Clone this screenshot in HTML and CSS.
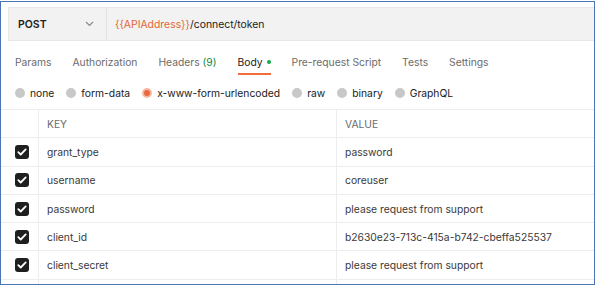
FILE: index.html
```html
<!DOCTYPE html>
<html lang="en">
<head>
    <meta charset="UTF-8">
    <title>POST token request</title>
    <link rel="stylesheet" href="styles.css">
</head>
<body>
    <div class="frame">

        <!-- request line -->
        <div class="request-bar">
            <div class="method">
                <span>POST</span>
                <svg class="chevron" width="9" height="6" viewBox="0 0 9 6"><path d="M1 1l3.5 3.5L8 1" fill="none" stroke="#8a8a8a" stroke-width="1.2"/></svg>
            </div>
            <div class="url"><span class="var">{{APIAddress}}</span>/connect/token</div>
        </div>

        <!-- tabs -->
        <div class="tabs">
            <div class="tab">Params</div>
            <div class="tab">Authorization</div>
            <div class="tab">Headers <span class="count">(9)</span></div>
            <div class="tab active">Body <span class="dot"></span></div>
            <div class="tab">Pre-request Script</div>
            <div class="tab">Tests</div>
            <div class="tab">Settings</div>
        </div>

        <!-- body types -->
        <div class="body-types">
            <div class="radio"><span class="circle"></span>none</div>
            <div class="radio"><span class="circle"></span>form-data</div>
            <div class="radio"><span class="circle checked"></span>x-www-form-urlencoded</div>
            <div class="radio"><span class="circle"></span>raw</div>
            <div class="radio"><span class="circle"></span>binary</div>
            <div class="radio"><span class="circle"></span>GraphQL</div>
        </div>

        <!-- key / value table -->
        <div class="kv-table">
            <div class="row head">
                <div class="cell check"></div>
                <div class="cell key">KEY</div>
                <div class="cell value">VALUE</div>
            </div>
            <div class="row">
                <div class="cell check"><span class="box"><svg width="10" height="8" viewBox="0 0 10 8"><path d="M1.3 4.2l2.4 2.3L8.7 1.4" fill="none" stroke="#fff" stroke-width="1.8" stroke-linecap="round" stroke-linejoin="round"/></svg></span></div>
                <div class="cell key">grant_type</div>
                <div class="cell value">password</div>
            </div>
            <div class="row">
                <div class="cell check"><span class="box"><svg width="10" height="8" viewBox="0 0 10 8"><path d="M1.3 4.2l2.4 2.3L8.7 1.4" fill="none" stroke="#fff" stroke-width="1.8" stroke-linecap="round" stroke-linejoin="round"/></svg></span></div>
                <div class="cell key">username</div>
                <div class="cell value">coreuser</div>
            </div>
            <div class="row">
                <div class="cell check"><span class="box"><svg width="10" height="8" viewBox="0 0 10 8"><path d="M1.3 4.2l2.4 2.3L8.7 1.4" fill="none" stroke="#fff" stroke-width="1.8" stroke-linecap="round" stroke-linejoin="round"/></svg></span></div>
                <div class="cell key">password</div>
                <div class="cell value">please request from support</div>
            </div>
            <div class="row">
                <div class="cell check"><span class="box"><svg width="10" height="8" viewBox="0 0 10 8"><path d="M1.3 4.2l2.4 2.3L8.7 1.4" fill="none" stroke="#fff" stroke-width="1.8" stroke-linecap="round" stroke-linejoin="round"/></svg></span></div>
                <div class="cell key">client_id</div>
                <div class="cell value">b2630e23-713c-415a-b742-cbeffa525537</div>
            </div>
            <div class="row">
                <div class="cell check"><span class="box"><svg width="10" height="8" viewBox="0 0 10 8"><path d="M1.3 4.2l2.4 2.3L8.7 1.4" fill="none" stroke="#fff" stroke-width="1.8" stroke-linecap="round" stroke-linejoin="round"/></svg></span></div>
                <div class="cell key">client_secret</div>
                <div class="cell value">please request from support</div>
            </div>
            <div class="row">
                <div class="cell check"></div>
                <div class="cell key"></div>
                <div class="cell value"></div>
            </div>
        </div>
    </div>
</body>
</html>
```

FILE: styles.css
```css
body {
    margin: 0;
    background: #fff;
    font-family: 'Inter', 'Liberation Sans', sans-serif;
    font-size: 10.3px;
    color: #212121;
}

.frame {
    box-sizing: border-box;
    width: 595px;
    height: 284px;
    margin-top: 1px;
    border: 1px solid #4a74b6;
    padding: 5px 0 0 7px;
    overflow: hidden;
}

/* request line */
.request-bar {
    display: flex;
    height: 34px;
    background: #f2f2f2;
    border: 1px solid #e8e8e8;
    border-right: none;
    box-sizing: border-box;
}

.method {
    width: 98px;
    box-sizing: border-box;
    padding: 0 10px 0 9px;
    display: flex;
    align-items: center;
    justify-content: space-between;
    border-right: 1px solid #e2e2e2;
    font-weight: 600;
    font-size: 10.5px;
}

.chevron {
    margin-right: 2px;
}

.url {
    display: flex;
    align-items: center;
    padding-left: 8px;
    font-size: 10.4px;
}

.var {
    color: #e4663a;
}

/* tabs */
.tabs {
    display: flex;
    gap: 21px;
    padding: 13px 0 0 7px;
    color: #6b6b6b;
}

.tab {
    padding-bottom: 3px;
    border-bottom: 2px solid transparent;
    line-height: 16px;
    display: flex;
    align-items: center;
}

.tab.active {
    color: #212121;
    border-bottom-color: #f26b3a;
}

.count {
    color: #0b8a3a;
    margin-left: 3px;
}

.dot {
    width: 4px;
    height: 4px;
    border-radius: 50%;
    background: #14a84b;
    margin-left: 4px;
}

/* body types */
.body-types {
    display: flex;
    gap: 12px;
    padding: 2px 0 0 7px;
    height: 34px;
    box-sizing: border-box;
    align-items: center;
    color: #212121;
}

.radio {
    display: flex;
    align-items: center;
    gap: 5px;
}

.circle {
    width: 10px;
    height: 10px;
    border-radius: 50%;
    background: #c8c8c8;
}

.circle.checked {
    box-sizing: border-box;
    background: #e9683f;
    border: 2px solid #f3b9a4;
}

/* key / value table */
.kv-table {
    margin-left: -7px;
    border-top: 1px solid #ededed;
}

.row {
    display: flex;
    height: 28.3px;
    box-sizing: border-box;
    border-bottom: 1px solid #ededed;
}

.cell {
    display: flex;
    align-items: center;
    color: #3a3a3a;
}

.check {
    width: 38px;
    justify-content: center;
    padding-left: 4px;
    box-sizing: border-box;
    border-right: 1px solid #ededed;
}

.key {
    width: 298px;
    padding-left: 8px;
    box-sizing: border-box;
    border-right: 1px solid #ededed;
}

.value {
    flex: 1;
    padding-left: 8px;
}

.head .cell {
    color: #6b6b6b;
}

.box {
    width: 14px;
    height: 14px;
    border-radius: 3px;
    background: #1f1f1f;
    display: flex;
    align-items: center;
    justify-content: center;
}
```
